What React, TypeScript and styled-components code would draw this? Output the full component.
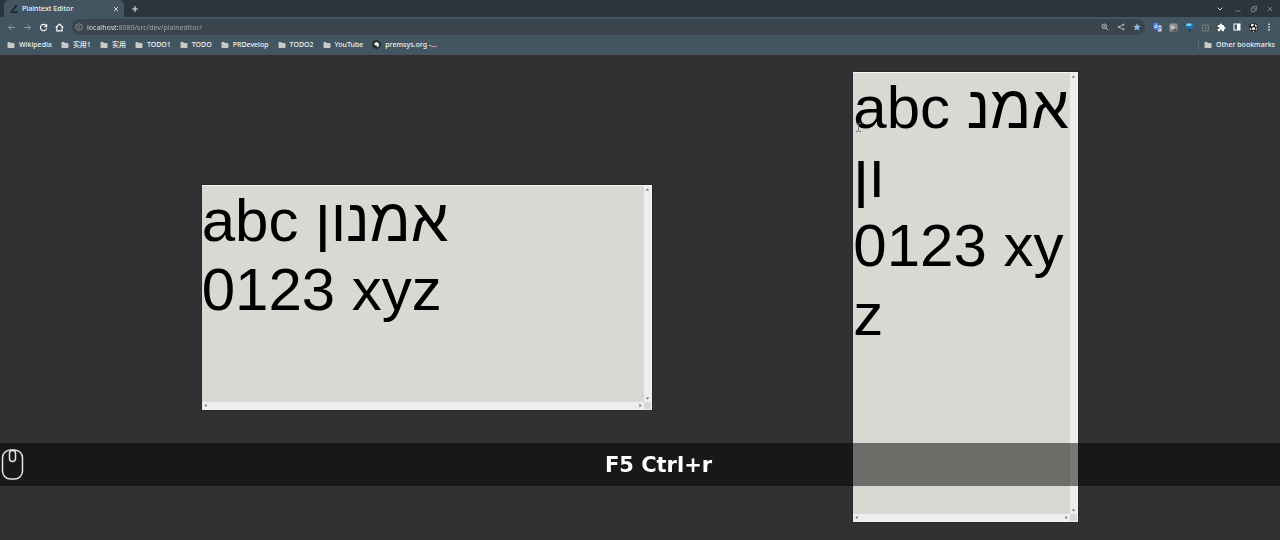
import React from 'react';
import styled, { createGlobalStyle } from 'styled-components';

const Global = createGlobalStyle`
  * { box-sizing: border-box; }
  body { margin: 0; background: #333033; }
  button, input { font: inherit; color: inherit; border: 0; padding: 0; background: none; }
`;

const Screen = styled.div`
  display: flex;
  flex-direction: column;
  min-height: 100vh;
  font: 500 7px/10px "Noto Sans", "Noto Sans CJK SC", sans-serif;
  color: #f0f3f4;
  background: #333033;
`;

const TabStrip = styled.header`
  display: flex;
  align-items: center;
  height: 17px;
  padding: 0 5px 0 4px;
  background: #2b353d;
`;

const Tab = styled.div`
  display: flex;
  align-items: center;
  gap: 3px;
  width: 120px;
  height: 17px;
  padding: 0 4px 0 6px;
  border-radius: 5px 5px 0 0;
  background: #435560;
`;

const TabTitle = styled.span`
  flex: 1;
  white-space: nowrap;
`;

const IconButton = styled.button<{ $size?: number }>`
  display: flex;
  flex: none;
  align-items: center;
  justify-content: center;
  width: ${(p) => p.$size ?? 10}px;
  height: ${(p) => p.$size ?? 10}px;
`;

const NewTab = styled(IconButton)`
  margin-left: 6px;
`;

const WindowControls = styled.div`
  display: flex;
  align-items: center;
  gap: 6px;
  margin-left: auto;
`;

const Toolbar = styled.div`
  display: flex;
  align-items: center;
  gap: 6px;
  height: 20px;
  padding: 0 6px;
  background: #435560;
`;

const AddressBar = styled.label`
  display: flex;
  flex: 1;
  align-items: center;
  gap: 6px;
  height: 16px;
  margin: 0 1px 0 2px;
  padding: 0 3px 0 2px;
  border-radius: 8px;
  background: #39444c;
`;

const Address = styled.input`
  flex: 1;
  min-width: 0;
  height: 12px;
  margin-left: -3px;
  outline: 0;
  font-weight: 400;
  background: linear-gradient(90deg, #eceff0 31px, #a5adb2 31px);
  background-clip: text;
  -webkit-text-fill-color: transparent;
`;

const Bookmarks = styled.nav`
  display: flex;
  align-items: center;
  gap: 9px;
  height: 18px;
  padding: 0 5px 2px 7px;
  border-bottom: 1px solid #4a5359;
  background: #435560;
`;

const Bookmark = styled.a`
  display: flex;
  align-items: center;
  gap: 4px;
  color: inherit;
  text-decoration: none;
  white-space: nowrap;
`;

const OtherBookmarks = styled.div`
  display: flex;
  margin-left: auto;
  padding-left: 5px;
  border-left: 1px solid #5c6b75;
`;

const Page = styled.main`
  display: flex;
  flex: 1;
  align-items: center;
  justify-content: space-evenly;
  padding-bottom: 1px;
`;

const Editor = styled.section<{ $width: number; $height: number }>`
  display: grid;
  grid-template: 1fr 7px / 1fr 7px;
  width: ${(p) => p.$width}px;
  height: ${(p) => p.$height}px;
  border: solid #f4f4f4;
  border-width: 1px 1px 1px 0;
  background: #d9d8d3;
  outline: 1px solid #29272a;
`;

const EditorText = styled.textarea`
  width: 100%;
  height: 100%;
  padding: 0;
  border: 0;
  outline: 0;
  resize: none;
  overflow: hidden;
  background: none;
  color: #000;
  font: 60px/69px "Liberation Sans", sans-serif;
  word-break: break-all;
`;

const ScrollTrack = styled.div<{ $horizontal?: boolean }>`
  display: flex;
  flex-direction: ${(p) => (p.$horizontal ? 'row' : 'column')};
  justify-content: space-between;
  background: #efedf0;
`;

const KeyOverlay = styled.div`
  position: fixed;
  left: 0;
  right: 0;
  bottom: 54px;
  display: flex;
  align-items: center;
  gap: 12px;
  height: 43px;
  padding-left: 1px;
  background: rgba(0, 0, 0, 0.5);
  color: #fff;
  font: bold 21px/26px "DejaVu Sans", sans-serif;
`;

const PressedKeys = styled.output`
  flex: 1;
  text-align: center;
`;

const Pointer = styled.svg`
  position: absolute;
  left: 3px;
  top: 50px;
`;

const PointerHost = styled.div`
  position: relative;
`;

type IconProps = { size?: number; color?: string; children: React.ReactNode };

/* Stroked 24-unit icon */
const Stroke = ({ size = 9, color = '#e6eaec', children }: IconProps) => (
  <svg width={size} height={size} viewBox="0 0 24 24" fill="none" stroke={color} strokeWidth="2.6" aria-hidden="true">
    {children}
  </svg>
);

const Folder = () => (
  <svg width="8" height="8" viewBox="0 0 16 16" fill="#c9c9c9" aria-hidden="true">
    <path d="M1 3.5Q1 2 2.500 2H6l2 2h5.500Q15 4 15 5.500v7Q15 14 13.500 14h-11Q1 14 1 12.500z" />
  </svg>
);

const Premsys = () => (
  <svg width="9" height="9" viewBox="0 0 18 18" aria-hidden="true">
    <circle cx="9" cy="9" r="8.5" fill="#20262a" />
    <path d="M5 6l4-2 4 2 1 5-2 4-3-4-4-1z" fill="#f4f4f4" />
    <path d="M4 10l4 2 1 3" fill="none" stroke="#666" />
  </svg>
);

const Pencil = () => (
  <svg width="9" height="9" viewBox="0 0 18 18" aria-hidden="true">
    <path d="M3 13L12 1l3 2L6.500 14 3 15z" fill="#1d252b" />
    <path d="M1 16.500h14" stroke="#141a1e" strokeWidth="2.500" />
  </svg>
);

const Translate = () => (
  <svg width="9" height="9" viewBox="0 0 18 18" aria-hidden="true">
    <path d="M8 5h9v12H10z" fill="#d5dce4" />
    <path d="M1 0h8l4 13H1z" fill="#4a8af0" />
    <path d="M8.500 5H5.500a2.300 2.300 0 1 0 2.500 2.500H6" fill="none" stroke="#fff" strokeWidth="1.400" />
    <path d="M12 9h4M14 8v2M12 14q3-2 3.500-5" fill="none" stroke="#5f7386" strokeWidth="1.200" />
  </svg>
);

const Notes = () => (
  <svg width="9" height="9" viewBox="0 0 18 18" aria-hidden="true">
    <rect x="1" y="1" width="16" height="16" rx="1" fill="#8f9291" />
    <path d="M4 4v8M7 5v7M10 7v5M4 8h6" fill="none" stroke="#d4d4d4" strokeWidth="1.500" />
    <path d="M6 16l8-5 2 5z" fill="#4c4f50" />
  </svg>
);

const Gem = () => (
  <svg width="9" height="9" viewBox="0 0 18 18" aria-hidden="true">
    <path d="M3 1h12l3 5-6 6H6L0 6z" fill="#1579b8" />
    <path d="M4 1h8l1 4-5 1-6-1z" fill="#8ed3f4" />
    <path d="M7 11h4v5l-2 2-2-2z" fill="#1c3f55" />
  </svg>
);

const Alarm = () => (
  <svg width="9" height="9" viewBox="0 0 18 18" fill="none" stroke="#84817d" strokeWidth="2" aria-hidden="true">
    <rect x="3" y="4" width="12" height="12" rx="4" />
    <path d="M1 4l3-3M17 4l-3-3M9 7v4h3M4 15l-2 2M14 15l2 2" />
  </svg>
);

const Puzzle = () => (
  <svg width="9" height="9" viewBox="0 0 24 24" fill="#fff" aria-hidden="true">
    <path d="M20.500 11H19V7c0-1.100-.9-2-2-2h-4V3.500a2.500 2.500 0 0 0-5 0V5H4c-1.100 0-2 .9-2 2v3.800h1.500a2.700 2.700 0 0 1 0 5.400H2V20c0 1.100.9 2 2 2h3.800v-1.500a2.700 2.700 0 0 1 5.400 0V22H17c1.100 0 2-.9 2-2v-4h1.500a2.500 2.500 0 0 0 0-5z" />
  </svg>
);

const SidePanel = () => (
  <svg width="8" height="8" viewBox="0 0 16 16" aria-hidden="true">
    <path d="M1 1h14v14H1zM3 3v10h5V3z" fill="#fff" fillRule="evenodd" />
  </svg>
);

const Avatar = () => (
  <svg width="9" height="9" viewBox="0 0 18 18" aria-hidden="true">
    <circle cx="9" cy="9" r="9" fill="#1b1d1f" />
    <path d="M4 3l4-2 2 2-2 3-4 1zM12 2l4 4-1 3-3-3zM6 10l3-2 3 2-1 4H7zM1 9l3 2 1 4-3-2zM16 10l1 1-3 4-1-2zM7 16h4l-2 2z" fill="#fff" />
  </svg>
);

const MouseIcon = () => (
  <svg width="24" height="34" viewBox="0 0 24 34" fill="none" stroke="#e4e4e4" strokeWidth="1.500" aria-hidden="true">
    <rect x="1.500" y="2" width="20" height="29" rx="8" />
    <rect x="8.500" y="2.500" width="6" height="11" rx="3" />
  </svg>
);

type Direction = 'up' | 'down' | 'left' | 'right';
const arrows: Record<Direction, string> = {
  up: 'M2 4.500h3L3.500 2.500z',
  down: 'M2 2.500h3L3.500 4.500z',
  left: 'M4.500 2v3L2.500 3.500z',
  right: 'M2.500 2v3l2-1.500z',
};

const ScrollArrow = ({ to }: { to: Direction }) => (
  <IconButton $size={7} aria-label={`Scroll ${to}`}>
    <svg width="7" height="7" viewBox="0 0 7 7" aria-hidden="true">
      <path d={arrows[to]} fill="#77757a" stroke="#77757a" strokeWidth=".2" />
    </svg>
  </IconButton>
);

const text = 'abc אמנון\n0123 xyz';

const PlainEditor = ({ label, width, height, pointer }: { label: string; width: number; height: number; pointer?: boolean }) => (
  <PointerHost>
    <Editor $width={width} $height={height}>
      <EditorText aria-label={label} defaultValue={text} dir="ltr" spellCheck={false} />
      <ScrollTrack>
        <ScrollArrow to="up" />
        <ScrollArrow to="down" />
      </ScrollTrack>
      <ScrollTrack $horizontal>
        <ScrollArrow to="left" />
        <ScrollArrow to="right" />
      </ScrollTrack>
    </Editor>
    {pointer && (
      <Pointer width="5" height="11" viewBox="0 0 5 11" aria-hidden="true" fill="none">
        <path d="M0 1.500h2M3 1.500h2M2.500 2v7M0 9.500h2M3 9.500h2" stroke="#777" />
      </Pointer>
    )}
  </PointerHost>
);

const folders = ['Wikipedia', '实用1', '实用', 'TODO1', 'TODO', 'PRDevelop', 'TODO2', 'YouTube'];

export default function App() {
  return (
    <Screen>
      <Global />
      <TabStrip>
        <Tab>
          <Pencil />
          <TabTitle>Plaintext Editor</TabTitle>
          <IconButton $size={8} aria-label="Close tab">
            <Stroke size={8}><path d="M6 6l12 12M18 6L6 18" /></Stroke>
          </IconButton>
        </Tab>
        <NewTab aria-label="New tab"><Stroke size={10}><path d="M12 5v14M5 12h14" /></Stroke></NewTab>
        <WindowControls>
          <IconButton $size={14} aria-label="Search tabs"><Stroke size={8}><path d="M5 8l7 7 7-7" /></Stroke></IconButton>
          <IconButton aria-label="Minimize"><Stroke size={8} color="#7f898f"><path d="M4 18h16" /></Stroke></IconButton>
          <IconButton aria-label="Restore"><Stroke size={8} color="#7f898f"><path d="M4 9h11v11H4zM9 8V4h11v11h-4" /></Stroke></IconButton>
          <IconButton aria-label="Close window"><Stroke size={8} color="#7f898f"><path d="M5 5l14 14M19 5L5 19" /></Stroke></IconButton>
        </WindowControls>
      </TabStrip>
      <Toolbar>
        <IconButton aria-label="Back"><Stroke color="#909ca3"><path d="M21 12H4M12 4l-8 8 8 8" /></Stroke></IconButton>
        <IconButton aria-label="Forward"><Stroke color="#909ca3"><path d="M3 12h17M12 4l8 8-8 8" /></Stroke></IconButton>
        <IconButton aria-label="Reload">
          <Stroke color="#fff"><path d="M19 7a8.500 8.500 0 1 0 1.500 7M20.500 3v7h-7" strokeWidth="3" /></Stroke>
        </IconButton>
        <IconButton aria-label="Home">
          <Stroke color="#fff"><path d="M2 12L12 3l10 9M5 10v11h14V10" strokeWidth="3" /></Stroke>
        </IconButton>
        <AddressBar>
          <IconButton aria-label="Site information">
            <Stroke color="#a9b1b6" size={8}><circle cx="12" cy="12" r="10" strokeWidth="2" /><path d="M12 11v6M12 6v3" /></Stroke>
          </IconButton>
          <Address aria-label="Address" defaultValue="localhost:8080/src/dev/plaineditor/" spellCheck={false} />
          <IconButton aria-label="Zoom">
            <Stroke color="#bcc3c7" size={8}><circle cx="10" cy="10" r="7" /><path d="M15 15l7 7M10 7v6M7 10h6" /></Stroke>
          </IconButton>
          <IconButton aria-label="Share">
            <Stroke color="#bcc3c7" size={8}>
              <path d="M19 5L5 12l14 7" />
              <circle cx="19" cy="5" r="2" /><circle cx="5" cy="12" r="2" /><circle cx="19" cy="19" r="2" />
            </Stroke>
          </IconButton>
          <IconButton aria-label="Bookmark this tab">
            <svg width="8" height="8" viewBox="0 0 24 24" fill="#8ab4e8" aria-hidden="true">
              <path d="M12 1l3.300 7.600 8.200.7-6.200 5.400 1.900 8L12 18.400l-7.200 4.300 1.900-8L.5 9.300l8.200-.7z" />
            </svg>
          </IconButton>
        </AddressBar>
        <IconButton aria-label="Translate"><Translate /></IconButton>
        <IconButton aria-label="Notes"><Notes /></IconButton>
        <IconButton aria-label="Gem"><Gem /></IconButton>
        <IconButton aria-label="Alarm"><Alarm /></IconButton>
        <IconButton aria-label="Extensions"><Puzzle /></IconButton>
        <IconButton aria-label="Side panel"><SidePanel /></IconButton>
        <IconButton aria-label="Profile"><Avatar /></IconButton>
        <IconButton aria-label="Menu">
          <svg width="8" height="8" viewBox="0 0 24 24" fill="#fff" aria-hidden="true">
            <circle cx="12" cy="4" r="2.500" /><circle cx="12" cy="12" r="2.500" /><circle cx="12" cy="20" r="2.500" />
          </svg>
        </IconButton>
      </Toolbar>
      <Bookmarks aria-label="Bookmarks">
        {folders.map((name) => (
          <Bookmark key={name} href="#"><Folder />{name}</Bookmark>
        ))}
        <Bookmark href="#"><Premsys />premsys.org -…</Bookmark>
        <OtherBookmarks>
          <Bookmark href="#"><Folder />Other bookmarks</Bookmark>
        </OtherBookmarks>
      </Bookmarks>
      <Page>
        <PlainEditor label="Wide editor" width={450} height={225} />
        <PlainEditor label="Tall editor" width={225} height={450} pointer />
      </Page>
      <KeyOverlay>
        <MouseIcon />
        <PressedKeys>F5 Ctrl+r</PressedKeys>
      </KeyOverlay>
    </Screen>
  );
}
